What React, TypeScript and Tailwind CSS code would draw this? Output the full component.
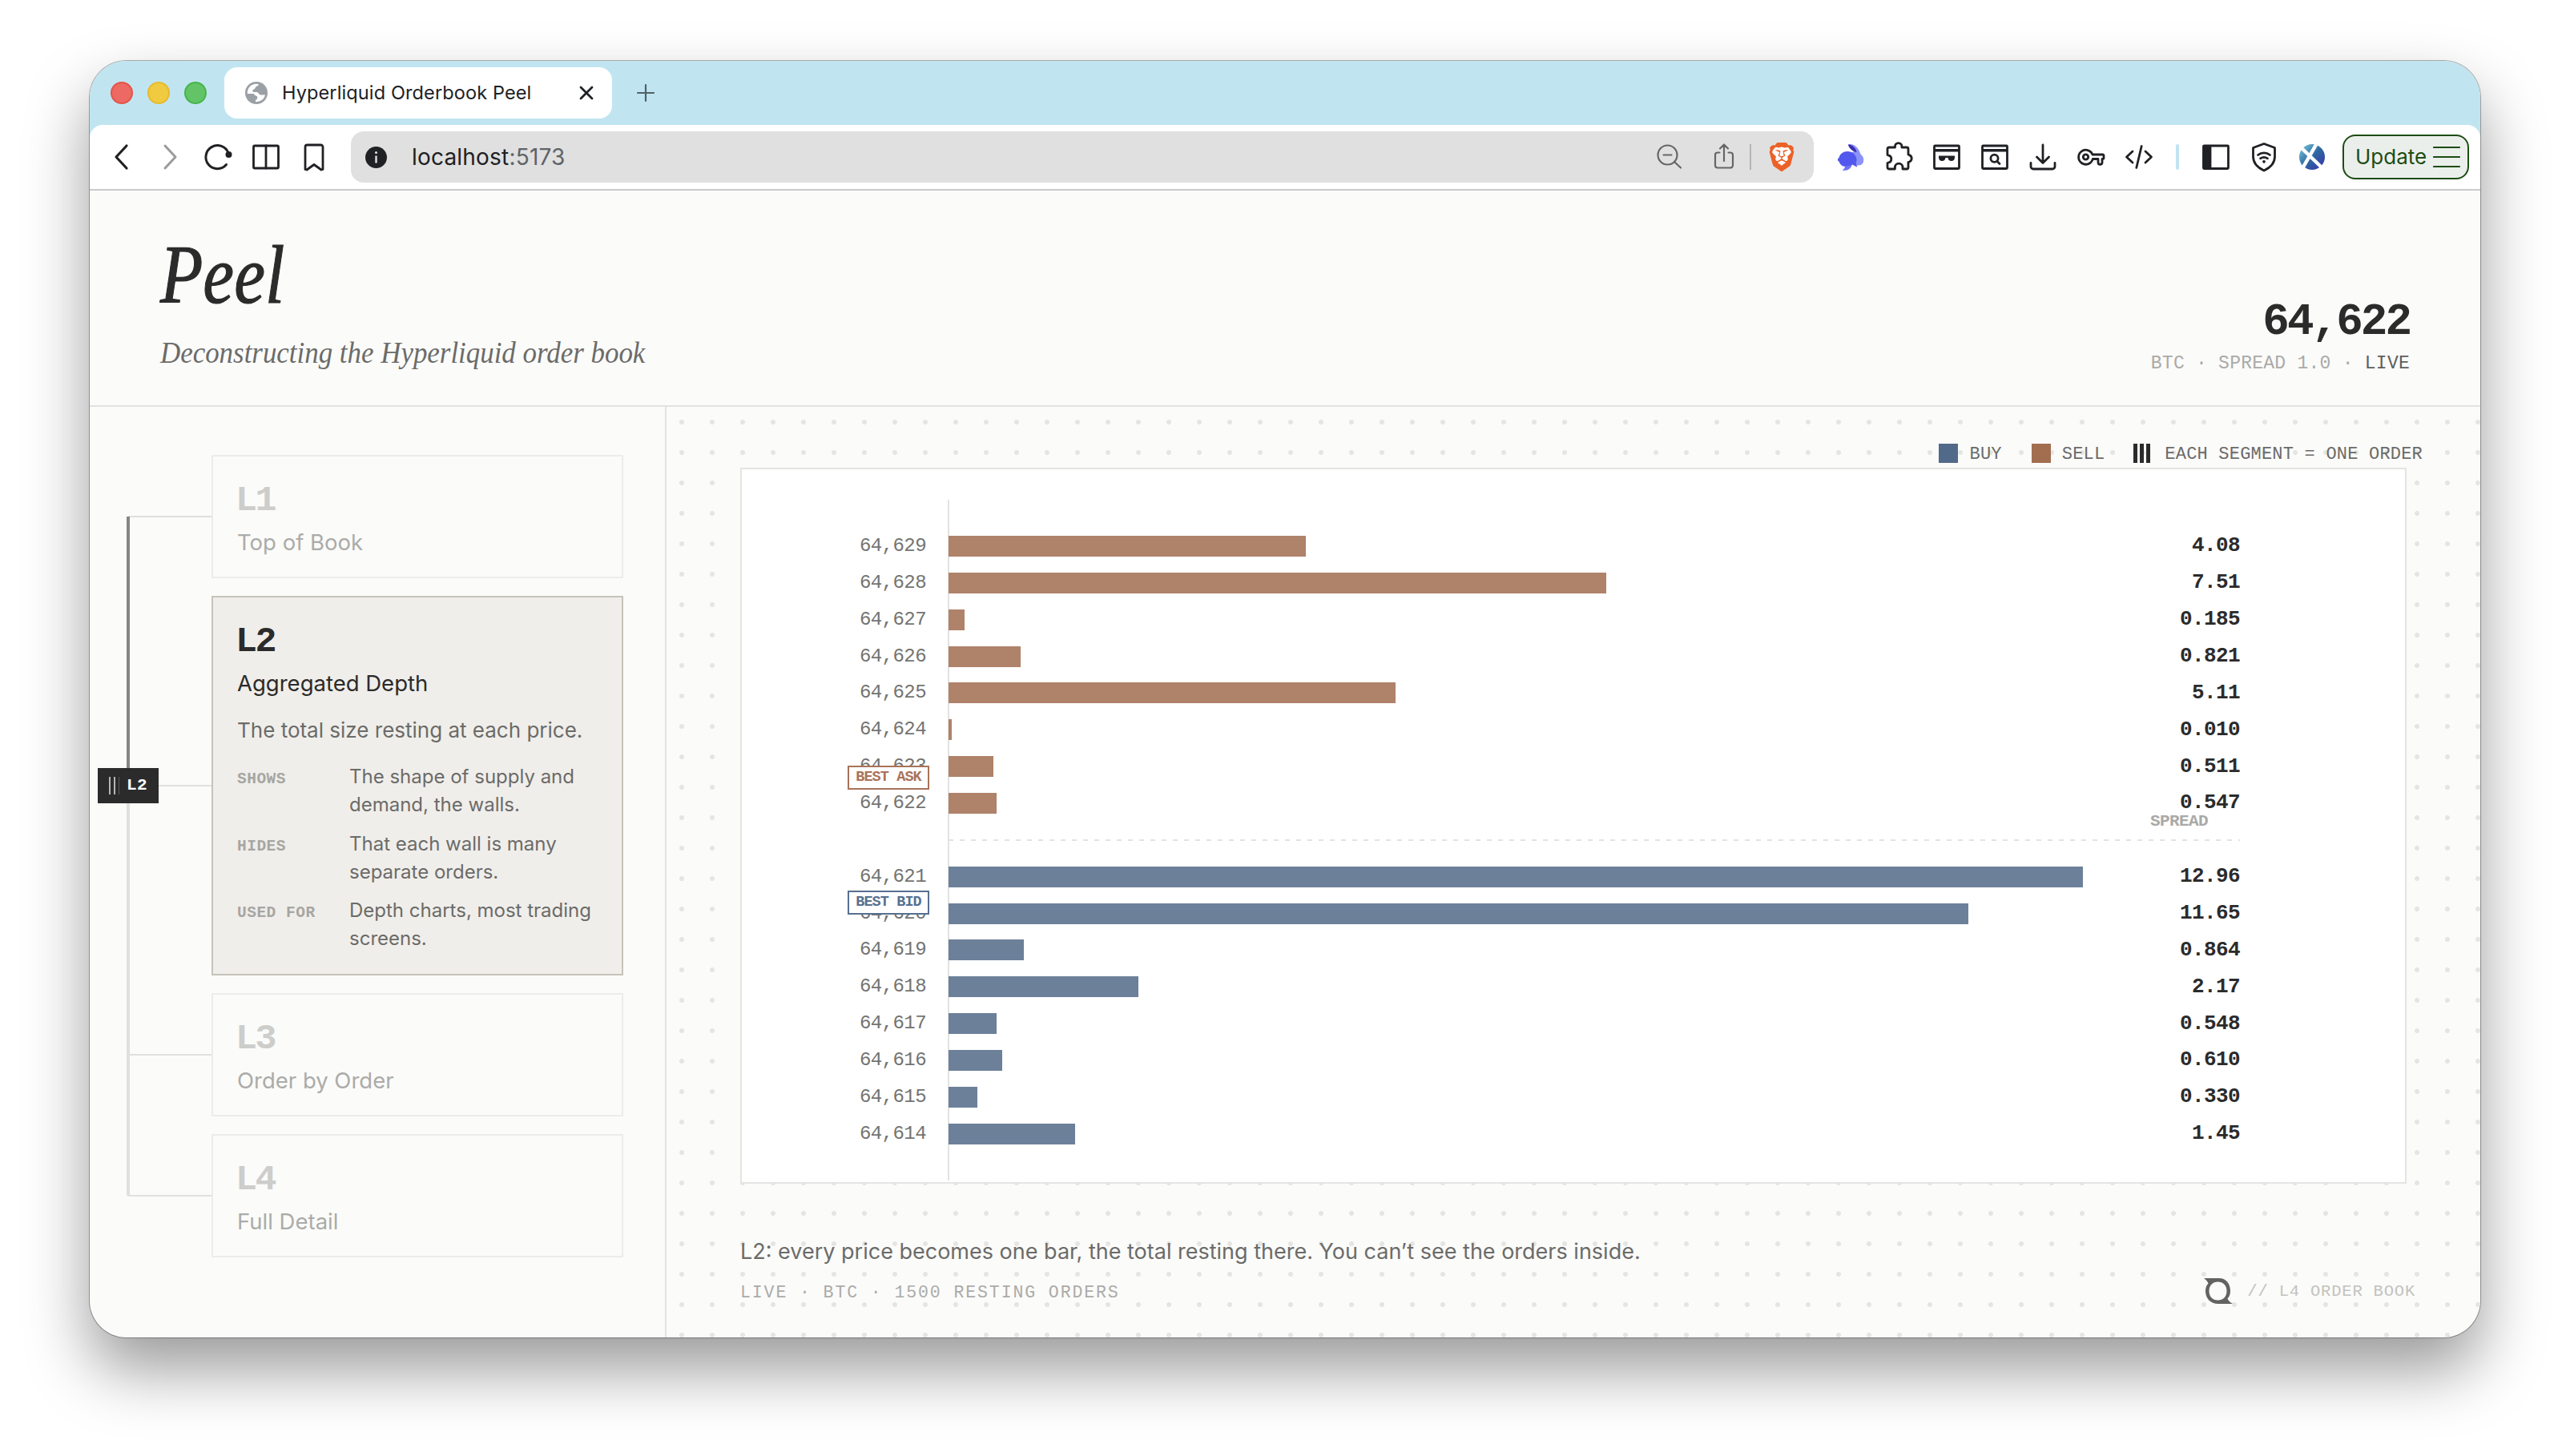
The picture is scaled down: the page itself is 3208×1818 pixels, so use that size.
import type { ReactNode } from 'react';
import { SiBrave } from 'react-icons/si';

type Side = 'ask' | 'bid';

interface Level {
  price: string;
  size: string;
  side: Side;
}

interface Layer {
  id: string;
  name: string;
  active?: boolean;
}

const LAYERS: Layer[] = [
  { id: 'L1', name: 'Top of Book' },
  { id: 'L2', name: 'Aggregated Depth', active: true },
  { id: 'L3', name: 'Order by Order' },
  { id: 'L4', name: 'Full Detail' },
];

const DETAILS = [
  { label: 'SHOWS', text: 'The shape of supply and demand, the walls.' },
  { label: 'HIDES', text: 'That each wall is many separate orders.' },
  { label: 'USED FOR', text: 'Depth charts, most trading screens.' },
];

const ASKS: Level[] = [
  { price: '64,629', size: '4.08', side: 'ask' },
  { price: '64,628', size: '7.51', side: 'ask' },
  { price: '64,627', size: '0.185', side: 'ask' },
  { price: '64,626', size: '0.821', side: 'ask' },
  { price: '64,625', size: '5.11', side: 'ask' },
  { price: '64,624', size: '0.010', side: 'ask' },
  { price: '64,623', size: '0.511', side: 'ask' },
  { price: '64,622', size: '0.547', side: 'ask' },
];

const BIDS: Level[] = [
  { price: '64,621', size: '12.96', side: 'bid' },
  { price: '64,620', size: '11.65', side: 'bid' },
  { price: '64,619', size: '0.864', side: 'bid' },
  { price: '64,618', size: '2.17', side: 'bid' },
  { price: '64,617', size: '0.548', side: 'bid' },
  { price: '64,616', size: '0.610', side: 'bid' },
  { price: '64,615', size: '0.330', side: 'bid' },
  { price: '64,614', size: '1.45', side: 'bid' },
];

const MAX_SIZE = 12.96;
const MAX_WIDTH = 1416;

function IconCell({ children }: { children: ReactNode }) {
  return <span className="flex w-[60px] shrink-0 items-center justify-center">{children}</span>;
}

function Stroke({ children, className = 'text-[#202124]' }: { children: ReactNode; className?: string }) {
  return (
    <svg
      width="40"
      height="40"
      viewBox="0 0 40 40"
      fill="none"
      stroke="currentColor"
      strokeWidth="2.8"
      strokeLinecap="round"
      strokeLinejoin="round"
      className={className}
    >
      {children}
    </svg>
  );
}

function TabStrip() {
  return (
    <div className="flex h-20 items-center bg-[#c1e5f0] pl-[26px]">
      <div className="flex gap-[18px]">
        <span className="size-7 rounded-full border-2 border-[#e5534b] bg-[#ec6a63]" />
        <span className="size-7 rounded-full border-2 border-[#e6bb2c] bg-[#f0ca3f]" />
        <span className="size-7 rounded-full border-2 border-[#47b44c] bg-[#62c466]" />
      </div>
      <div className="ml-[22px] flex h-16 w-[484px] items-center rounded-2xl bg-white pl-[26px] pr-5">
        <svg width="28" height="28" viewBox="0 0 28 28">
          <circle cx="14" cy="14" r="14" fill="#9aa0a6" />
          <path
            d="M2.800 15C2.400 8.500 7 3.300 13 2.800c2 0 3 .2 4 .6-.5 2.200-4 1.800-4.200 4.200-.1 1.800-3.300 1.600-3.300 3.900v1.600h4.800c2.500 0 2.700 3.400 5 3.400H25C24 21.500 19.500 25.200 13 25.200v-2.800c2.500 0 2.200-1.500 2.200-3.200 0-2.200-4-1.200-4.200-4.200z"
            fill="#fff"
          />
        </svg>
        <span className="ml-[18px] whitespace-nowrap font-['Inter',sans-serif] text-[23.500px] leading-8 tracking-[0.120px] text-[#202124]">
          Hyperliquid Orderbook Peel
        </span>
        <svg className="ml-auto" width="24" height="24" viewBox="0 0 24 24" stroke="#202124" strokeWidth="2.800" strokeLinecap="round">
          <path d="M5 5l14 14M19 5L5 19" />
        </svg>
      </div>
      <svg className="ml-[30px]" width="24" height="24" viewBox="0 0 24 24" stroke="#4f6168" strokeWidth="2.200" strokeLinecap="round">
        <path d="M12 2v20M2 12h20" />
      </svg>
    </div>
  );
}

function Toolbar() {
  return (
    <div className="bg-[#c1e5f0]">
      <div className="flex h-[82px] items-center rounded-t-2xl border-b-2 border-[#cbcbcb] bg-white pl-[10px] pr-[14px]">
        <IconCell>
          <Stroke>
            <path strokeWidth="3.200" d="M26 6L13 20l13 14" />
          </Stroke>
        </IconCell>
        <IconCell>
          <Stroke className="text-[#9b9b9b]">
            <path strokeWidth="3" d="M14 6l13 14-13 14" />
          </Stroke>
        </IconCell>
        <IconCell>
          <Stroke>
            <path strokeWidth="3" d="M30.500 29.500A14.500 14.500 0 1 1 33 15" />
            <circle cx="33.500" cy="17" r="4" fill="currentColor" stroke="none" />
          </Stroke>
        </IconCell>
        <IconCell>
          <Stroke>
            <rect x="4.500" y="6" width="31" height="28" rx="1.500" />
            <path d="M20 6v28" />
          </Stroke>
        </IconCell>
        <IconCell>
          <Stroke>
            <path d="M9 7.500A2.500 2.500 0 0 1 11.500 5h17A2.500 2.500 0 0 1 31 7.500V35.500l-2 .5-9-6.500-9 6.500-2-.5z" />
          </Stroke>
        </IconCell>

        <div className="ml-4 flex h-16 flex-1 items-center rounded-2xl bg-[#e0e0e0] pl-[18px]">
          <svg width="27" height="27" viewBox="0 0 27 27">
            <circle cx="13.500" cy="13.500" r="13.500" fill="#202124" />
            <circle cx="13.500" cy="7.500" r="1.500" fill="#e0e0e0" />
            <path d="M13.500 11.500v9" stroke="#e0e0e0" strokeWidth="2.400" />
          </svg>
          <span className="ml-[31px] whitespace-nowrap font-['Inter',sans-serif] text-[28px] leading-9 tracking-[0.200px] text-[#202124]">
            localhost<span className="text-[#5f6368]">:5173</span>
          </span>
          <div className="ml-auto flex items-center">
            <Stroke className="text-[#666]">
              <circle cx="17.500" cy="17.500" r="12" strokeWidth="2.200" />
              <path strokeWidth="2.200" d="M26.500 26.500l7.500 7M12.500 17.500h10" />
            </Stroke>
            <Stroke className="ml-7 text-[#666]">
              <path strokeWidth="2.200" d="M14.500 14.500H12A3 3 0 0 0 9 17.500V30.500a3 3 0 0 0 3 3h16a3 3 0 0 0 3-3V17.500a3 3 0 0 0-3-3h-2.500M20 25V5M15 9.500l5-5 5 5" />
            </Stroke>
            <span className="ml-3 h-8 w-0.5 bg-[#b4b4b4]" />
            <span className="relative ml-[20px] mr-[22px] flex h-9 w-9 items-center justify-center">
              <svg className="absolute" width="36" height="38" viewBox="0 0 36 38">
                <path d="M10 4h16l5 7-3 15-10 8-10-8-3-15z" fill="#fff" />
              </svg>
              <SiBrave className="relative size-[38px] text-[#ec6127]" />
            </span>
          </div>
        </div>

        <div className="ml-4 flex items-center">
          <IconCell>
            <svg width="40" height="40" viewBox="0 0 40 40">
              <path d="M17 4.500c5-2 13 2.500 15.500 12C35.500 19 37 22 36 26c-.7 3.500-4 5-8 4.500l-9-4 2-12c2-1 3.500-1.600 5-1.800-4-1.200-8-4.200-9-8.200z" fill="#8b93fa" />
              <path d="M17 4.500c4-.5 9.500 3.500 10.500 9.500-4-.6-9.500-4-10.500-9.500z" fill="#3a2fb0" />
              <path d="M4 24c-.3-1.500.3-2.500 1.500-3C6.500 16 11 13 16 13c6 0 11 4 11.500 10 .2 1.500-.2 3-.8 4.300l1.500 5.400-6-3.200C19.500 32 17 32.500 14 32c-5 0-7.500-3-8.300-6.200C4.800 25.500 4.300 25 4 24z" fill="#5258ee" />
              <path d="M10 37c1-1.500 2-2.500 3-4-1.200-.5 0-1.500 3-1.700l5.500-1.300c-.5 3.500-4.500 7.500-11.500 7z" fill="#6c73f8" />
            </svg>
          </IconCell>
          <IconCell>
            <Stroke>
              <path d="M6 10a2 2 0 0 1 2-2h7.500V6.800a4.200 4.200 0 0 1 8.400 0V8H30a2 2 0 0 1 2 2v7l1.500.6a4.600 4.600 0 0 1 0 8.400L32 26.600V33a2 2 0 0 1-2 2h-5v-2a4.800 4.800 0 0 0-9.600 0v2H8a2 2 0 0 1-2-2v-5.500l1-.3a4.800 4.800 0 0 0 0-9.400l-1-.3z" />
            </Stroke>
          </IconCell>
          <IconCell>
            <Stroke>
              <rect x="4.500" y="6" width="31" height="28.500" rx="1" />
              <path strokeWidth="3.600" strokeLinecap="butt" d="M4.500 11.800h31" />
              <path stroke="none" fill="currentColor" d="M10 18.500h20v2.200c-.3 3-1.600 4.300-4.200 4.300-2.600 0-3.800-1.400-4.300-4h-3c-.5 2.600-1.700 4-4.300 4-2.600 0-3.900-1.300-4.200-4.300z" />
            </Stroke>
          </IconCell>
          <IconCell>
            <Stroke>
              <rect x="4.500" y="6" width="31" height="28.500" rx="1" />
              <path strokeWidth="3.600" strokeLinecap="butt" d="M4.500 11.800h31" />
              <circle cx="19.500" cy="21.800" r="4.600" />
              <path d="M23 25.500l3 3" />
            </Stroke>
          </IconCell>
          <IconCell>
            <Stroke>
              <path d="M20 5v22M12.500 20l7.500 7.500 7.500-7.500M5 27.500V32a3 3 0 0 0 3 3h24a3 3 0 0 0 3-3V27.500" />
            </Stroke>
          </IconCell>
          <IconCell>
            <Stroke>
              <path d="M22 17h12.500a1.500 1.500 0 0 1 1.500 1.500v2.500a1.500 1.500 0 0 1-1.500 1.500H34v4.500c0 3-5 3-5 0V22.500H22.300a9 9 0 1 1-.3-5.500z" />
              <circle cx="13.500" cy="20" r="3.200" />
            </Stroke>
          </IconCell>
          <IconCell>
            <Stroke>
              <path d="M12 13l-7.500 7 7.500 7M28 13l7.500 7-7.500 7M23.200 6.500L16.800 33.500" />
            </Stroke>
          </IconCell>
          <span className="mx-4 h-8 w-1 rounded-full bg-[#c1e5f0]" />
          <IconCell>
            <Stroke>
              <rect x="4.500" y="6" width="31" height="28.500" rx="1" />
              <path fill="currentColor" d="M5 6.500h8v27.500H5z" />
            </Stroke>
          </IconCell>
          <IconCell>
            <Stroke>
              <path d="M20 3.500l13.500 5v11c0 8.500-5 13.500-13.500 17.500C11.500 33 6.500 28 6.500 19.500v-11z" />
              <path d="M12.500 17.500c4.500-3.500 10.500-3.500 15 0M15.500 21.800c3-2 6-2 9 0" />
              <circle cx="20" cy="25.800" r="1.900" fill="currentColor" stroke="none" />
            </Stroke>
          </IconCell>
          <IconCell>
            <svg width="32" height="32" viewBox="0 0 32 32">
              <defs>
                <linearGradient id="orb" x1="0" y1="0" x2="1" y2="1">
                  <stop offset="0" stopColor="#7fd0e0" />
                  <stop offset="0.500" stopColor="#2f68a0" />
                  <stop offset="1" stopColor="#3a2fae" />
                </linearGradient>
              </defs>
              <circle cx="16" cy="16" r="16" fill="url(#orb)" />
              <path d="M3 5l25 24M22 -1L3 32" stroke="#fff" strokeWidth="4.500" />
            </svg>
          </IconCell>
          <div className="ml-2 flex h-14 w-[158px] items-center rounded-2xl border-2 border-[#1d4d14] bg-[#ebefec] pl-[14px]">
            <span className="font-['Inter',sans-serif] text-[26px] leading-8 text-[#1d4d14]">Update</span>
            <svg className="ml-[8px] shrink-0" width="34" height="28" viewBox="0 0 34 28" stroke="#1d4d14" strokeWidth="2.200" strokeLinecap="round">
              <path d="M1 2h32M1 14h32M1 26h32" />
            </svg>
          </div>
        </div>
      </div>
    </div>
  );
}

function Header() {
  return (
    <header className="flex h-[270px] items-start justify-between border-b-2 border-[#e2e2e0] px-[88px]">
      <div className="pt-[55px] font-['Liberation_Serif',serif] italic">
        <h1 className="origin-left scale-x-[0.840] text-[104px] leading-[100px] text-[#2b2b2b] [-webkit-text-stroke:1.200px_#2b2b2b]">
          Peel
        </h1>
        <p className="mt-6 origin-left scale-x-[0.943] whitespace-nowrap text-[37px] leading-[48px] text-[#6b6b69]">
          Deconstructing the Hyperliquid order book
        </p>
      </div>
      <div className="pt-[134px] text-right font-['Liberation_Mono',monospace]">
        <div className="text-[56px] font-bold leading-[60px] tracking-[-3px] text-[#2b2b2b]">64,622</div>
        <div className="mt-[7px] whitespace-pre text-[23px] leading-[30px] tracking-[0.250px] text-[#aaaaa8]">
          BTC · SPREAD 1.0 · <span className="text-[#5f5f5d]">LIVE</span>
        </div>
      </div>
    </header>
  );
}

function LayerCard({ layer }: { layer: Layer }) {
  return (
    <div className="flex items-center">
      <span className="h-0.5 w-[104px] bg-[#e0e0de]" />
      <div
        className={
          layer.active
            ? 'w-[514px] border-2 border-[#c5c3ba] bg-[#f0eeea] px-[30px] pb-[27px] pt-8'
            : 'w-[514px] border-2 border-[#ececea] px-[30px] pb-[26px] pt-8'
        }
      >
        <div
          className={
            layer.active
              ? "-ml-0.5 font-['Liberation_Mono',monospace] text-[45px] font-bold leading-[48px] tracking-[-2.500px] text-[#2b2b2b]"
              : "-ml-0.5 font-['Liberation_Mono',monospace] text-[45px] font-bold leading-[48px] tracking-[-2.500px] text-[#cdcdcb]"
          }
        >
          {layer.id}
        </div>
        <div
          className={
            layer.active
              ? "mt-[10px] font-['Inter',sans-serif] text-[27.500px] leading-[34px] text-[#2b2b2b]"
              : "mt-[10px] font-['Inter',sans-serif] text-[27.500px] leading-[34px] text-[#ababa9]"
          }
        >
          {layer.name}
        </div>
        {layer.active && (
          <>
            <p className="mt-[22px] whitespace-nowrap font-['Inter',sans-serif] text-[26px] leading-10 text-[#6b6b69]">
              The total size resting at each price.
            </p>
            <dl className="mt-5 flex flex-col gap-[13.500px]">
              {DETAILS.map((item) => (
                <div key={item.label} className="flex items-baseline">
                  <dt className="w-[140px] shrink-0 font-['Liberation_Mono',monospace] text-[19.500px] font-bold tracking-[0.500px] text-[#a6a6a3]">
                    {item.label}
                  </dt>
                  <dd className="w-[312px] font-['Inter',sans-serif] text-[24px] leading-[35px] text-[#6b6b69]">{item.text}</dd>
                </div>
              ))}
            </dl>
          </>
        )}
      </div>
    </div>
  );
}

function Sidebar() {
  return (
    <aside className="relative w-[720px] shrink-0 border-r-2 border-[#e2e2e0] pl-12 pt-[60px]">
      <div className="flex flex-col gap-[22px]">
        {LAYERS.map((layer) => (
          <LayerCard key={layer.id} layer={layer} />
        ))}
      </div>
      <div className="absolute left-[46px] top-[137px] h-[336px] w-1 bg-[#858583]" />
      <div className="absolute left-[46px] top-[473px] h-[512px] w-1 bg-[#e0e0de]" />
      <div className="absolute left-[10px] top-[451px] flex h-11 w-[76px] items-center bg-[#2b2b2b] pl-[14px]">
        <span className="h-[22px] w-0.5 bg-[#b5b5b5]" />
        <span className="ml-1 h-[22px] w-0.5 bg-[#b5b5b5]" />
        <span className="ml-1 h-[22px] w-px bg-[#5a5a5a]" />
        <span className="ml-[9px] font-['Liberation_Mono',monospace] text-[21px] font-bold leading-8 tracking-[0.500px] text-white">L2</span>
      </div>
    </aside>
  );
}

function LevelRow({ level }: { level: Level }) {
  const width = Math.max(4, (parseFloat(level.size) / MAX_SIZE) * MAX_WIDTH);

  return (
    <div className="flex h-[45.870px] items-center font-['Liberation_Mono',monospace]">
      <span className="w-[230px] text-right text-[24px] tracking-[-0.550px] text-[#747472]">{level.price}</span>
      <div className="ml-[28px] w-[1416px]">
        <div className={level.side === 'ask' ? 'h-[26px] bg-[#af826a]' : 'h-[26px] bg-[#6c8099]'} style={{ width }} />
      </div>
      <span className="w-[196px] text-right text-[26px] font-bold tracking-[-0.600px] text-[#2b2b2b]">{level.size}</span>
    </div>
  );
}

function Legend() {
  return (
    <div className="-mr-[20px] flex h-6 items-center justify-end whitespace-pre font-['Liberation_Mono',monospace] text-[22px] leading-6 tracking-[0.200px] text-[#6b6b69]">
      <span className="size-6 bg-[#526a8a]" />
      <span className="ml-[15px] pt-1">BUY</span>
      <span className="ml-[37px] size-6 bg-[#a26e50]" />
      <span className="ml-[14px] pt-1">SELL</span>
      <span className="ml-[36px] flex gap-[3px]">
        <span className="h-6 w-[5px] bg-[#2b2b2b]" />
        <span className="h-6 w-[5px] bg-[#2b2b2b]" />
        <span className="h-6 w-[5px] bg-[#2b2b2b]" />
      </span>
      <span className="ml-[18px] pt-1">EACH SEGMENT = ONE ORDER</span>
    </div>
  );
}

function DepthChart() {
  return (
    <div className="relative mt-[6px] h-[894px] border-2 border-[#e4e4e2] bg-white pt-[73px]">
      <div className="absolute left-[257px] top-[38px] h-[850px] w-0.5 bg-[#e2e2e0]" />
      <div className="relative">
        {ASKS.map((level) => (
          <LevelRow key={level.price} level={level} />
        ))}
        <div className="relative flex h-[45.870px] items-center pl-[258px]">
          <div className="h-0.5 w-[1612px] bg-[repeating-linear-gradient(to_right,#e2e2e0_0,#e2e2e0_6px,transparent_6px,transparent_14px)]" />
          <span className="absolute -top-[12px] left-[1758px] font-['Liberation_Mono',monospace] text-[21px] font-bold leading-6 tracking-[-0.600px] text-[#a9a9a7]">
            SPREAD
          </span>
        </div>
        {BIDS.map((level) => (
          <LevelRow key={level.price} level={level} />
        ))}
      </div>
      <span className="absolute left-[132px] top-[370px] flex h-[30px] w-[102px] items-center justify-center whitespace-pre border-2 border-[#a97359] bg-white font-['Liberation_Mono',monospace] text-[18.500px] font-bold leading-[26px] tracking-[-0.900px] text-[#a97359]">
        BEST ASK
      </span>
      <span className="absolute left-[132px] top-[526px] flex h-[30px] w-[102px] items-center justify-center whitespace-pre border-2 border-[#57708f] bg-white font-['Liberation_Mono',monospace] text-[18.500px] font-bold leading-[26px] tracking-[-0.900px] text-[#57708f]">
        BEST BID
      </span>
    </div>
  );
}

function Footer() {
  return (
    <footer className="mt-[67px] flex items-end justify-between">
      <div>
        <p className="whitespace-nowrap font-['Inter',sans-serif] text-[27px] leading-9 text-[#6b6b69]">
          L2: every price becomes one bar, the total resting there. You can’t see the orders inside.
        </p>
        <p className="mt-[19px] whitespace-pre font-['Liberation_Mono',monospace] text-[21.500px] leading-7 tracking-[1.900px] text-[#ababa9]">
          LIVE · BTC · 1500 RESTING ORDERS
        </p>
      </div>
      <div className="-mr-[11px] flex items-center">
        <svg width="36" height="32" viewBox="0 0 36 32">
          <path
            fillRule="evenodd"
            fill="#636361"
            d="M0 0h19c9 0 14 7 14 16 0 4-1 7-3.500 9.500 1 2.500 3 4.500 6.500 6.500H18C8 32 2 25 2 16c0-4 1-7 3.500-9.500C4 3.500 3 2 0 0zM17.500 4.500C11 4.500 6.500 9 6.500 16s4.500 11.500 11 11.500S28.500 23 28.500 16 24 4.500 17.500 4.500z"
          />
        </svg>
        <span className="ml-[18px] whitespace-pre pt-0.5 font-['Liberation_Mono',monospace] text-[20.500px] leading-[30px] tracking-[0.800px] text-[#c2c2c0]">
          // L4 ORDER BOOK
        </span>
      </div>
    </footer>
  );
}

export default function App() {
  return (
    <div className="h-[1818px] w-[3208px] overflow-hidden bg-white px-28 pt-[76px]">
      <div className="flex h-[1594px] w-[2984px] flex-col overflow-hidden rounded-[46px] bg-[#fbfbf9] shadow-[0_0_0_1px_rgba(0,0,0,0.300),0_40px_80px_rgba(0,0,0,0.400)]">
        <TabStrip />
        <Toolbar />
        <Header />
        <div className="flex flex-1">
          <Sidebar />
          <main className="flex-1 bg-[radial-gradient(circle,#e5e5e3_2.600px,transparent_3.400px)] bg-[size:38px_38px] px-[92px] pt-[46px]">
            <Legend />
            <DepthChart />
            <Footer />
          </main>
        </div>
      </div>
    </div>
  );
}
